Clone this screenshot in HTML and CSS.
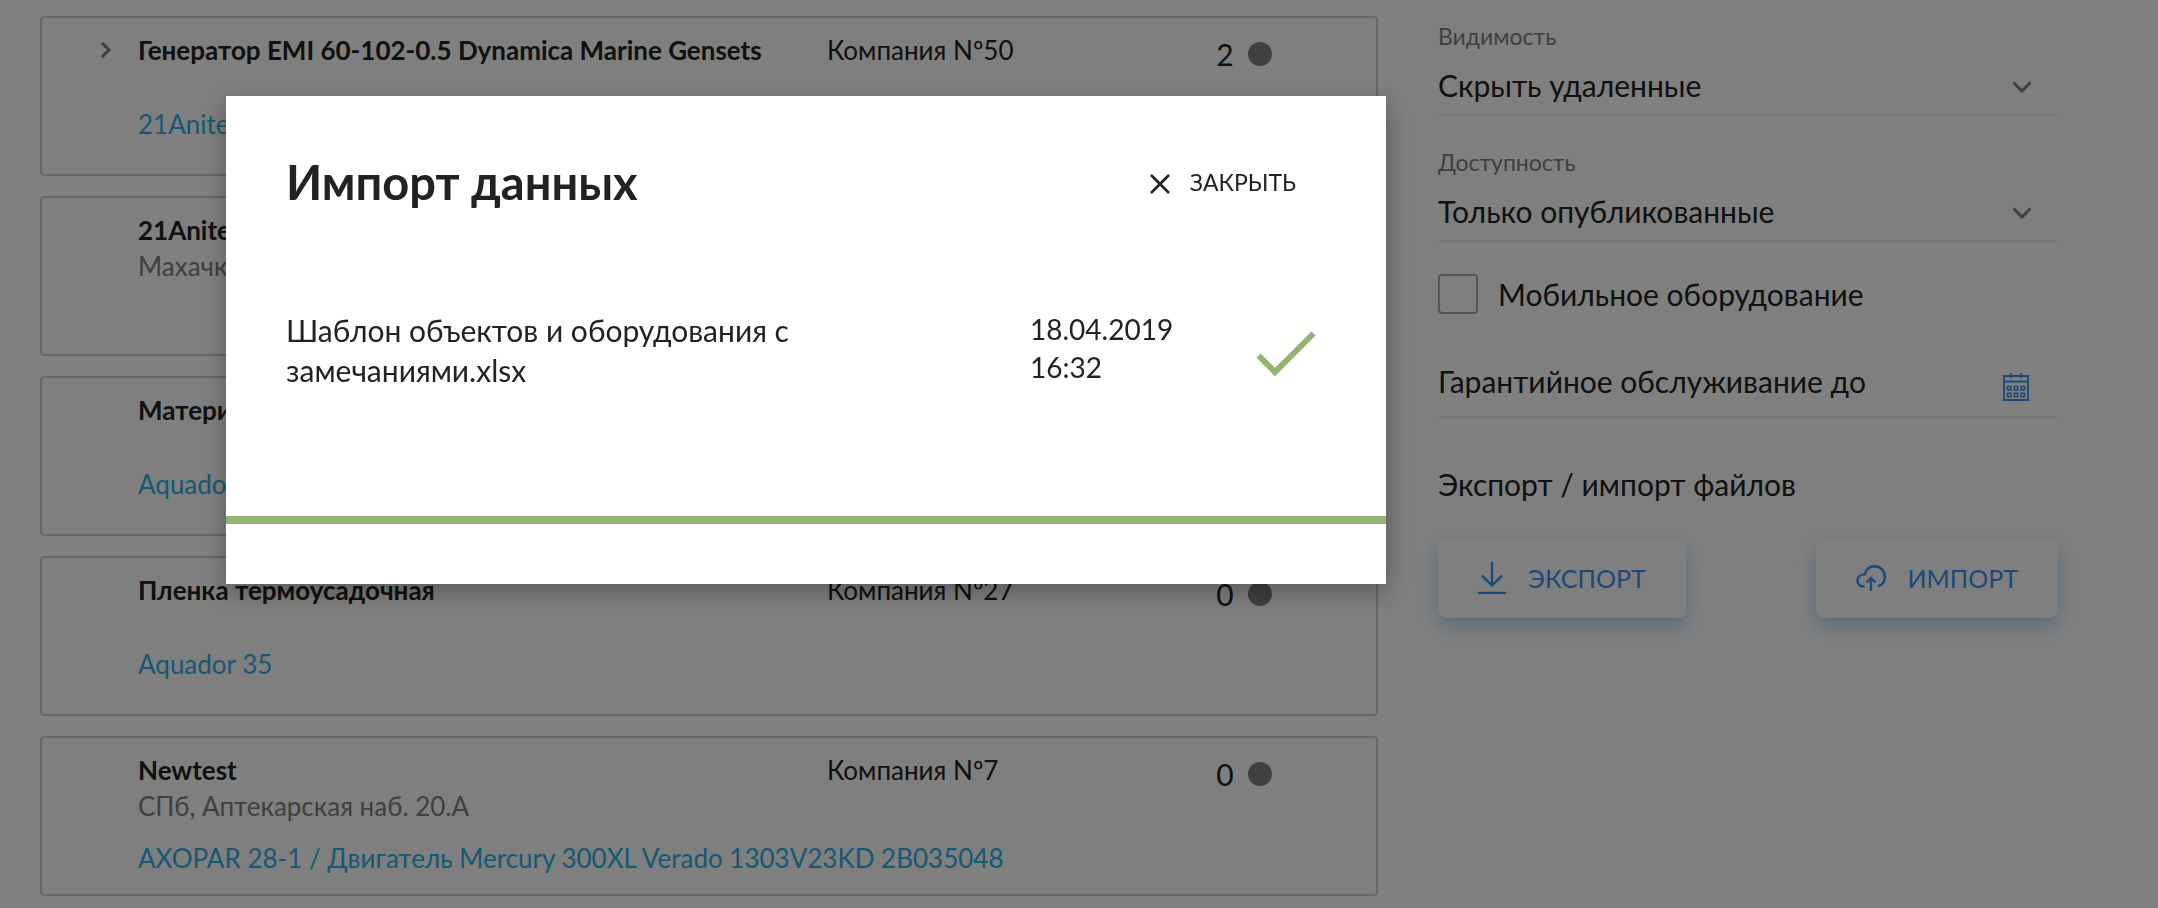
FILE: index.html
```html
<!DOCTYPE html>
<html lang="ru">
<head>
<meta charset="utf-8">
<meta name="viewport" content="width=device-width, initial-scale=1">
<title>Импорт данных</title>
<link rel="stylesheet" href="styles.css">
</head>
<body>
<div class="page">
  <main class="list">
    <article class="card">
      <button class="card-toggle" type="button" aria-label="Развернуть">
        <svg class="icon-toggle" viewBox="0 0 12 18"><path d="M2 2l7 7-7 7"/></svg>
      </button>
      <div class="card-info">
        <h2 class="card-title">Генератор EMI 60-102-0.5 Dynamica Marine Gensets</h2>
        <a class="card-link" href="#">21Anitek</a>
      </div>
      <p class="card-company">Компания Nº50</p>
      <p class="card-count">2<span class="dot"></span></p>
    </article>
    <article class="card">
      <div class="card-info">
        <h2 class="card-title">21Anitek</h2>
        <p class="card-address">Махачкала</p>
      </div>
    </article>
    <article class="card">
      <div class="card-info">
        <h2 class="card-title">Материал</h2>
        <a class="card-link" href="#">Aquador 35</a>
      </div>
    </article>
    <article class="card">
      <div class="card-info">
        <h2 class="card-title">Пленка термоусадочная</h2>
        <a class="card-link" href="#">Aquador 35</a>
      </div>
      <p class="card-company">Компания Nº27</p>
      <p class="card-count">0<span class="dot"></span></p>
    </article>
    <article class="card">
      <div class="card-info card-info-wide">
        <h2 class="card-title">Newtest</h2>
        <p class="card-address">СПб, Аптекарская наб. 20.А</p>
        <a class="card-link" href="#">AXOPAR 28-1 / Двигатель Mercury 300XL Verado 1303V23KD 2B035048</a>
      </div>
      <p class="card-company">Компания Nº7</p>
      <p class="card-count">0<span class="dot"></span></p>
    </article>
  </main>

  <aside class="filters">
    <div class="field">
      <label class="field-label" for="visibility">Видимость</label>
      <div class="control control-select">
        <select class="field-input" id="visibility"><option>Скрыть удаленные</option></select>
        <svg class="icon-chevron" viewBox="0 0 20 12"><path d="M1.500 1.500L10 10l8.500-8.500"/></svg>
      </div>
    </div>
    <div class="field">
      <label class="field-label" for="access">Доступность</label>
      <div class="control control-select">
        <select class="field-input" id="access"><option>Только опубликованные</option></select>
        <svg class="icon-chevron" viewBox="0 0 20 12"><path d="M1.500 1.500L10 10l8.500-8.500"/></svg>
      </div>
    </div>
    <label class="check"><input class="check-box" type="checkbox">Мобильное оборудование</label>
    <div class="control control-date">
      <input class="field-input" type="text" placeholder="Гарантийное обслуживание до" aria-label="Гарантийное обслуживание до">
      <svg class="icon-calendar" viewBox="0 0 26 28">
        <path stroke-width="1.800" d="M1 3h24v24H1zM1 8.500h24M8 0v5.500M18 0v5.500"/>
        <path stroke-width="1.500" d="M4.500 13.500h3.400v3.400H4.500zM11.300 13.500h3.400v3.400h-3.400zM18.100 13.500h3.400v3.400h-3.400zM4.500 20.300h3.400v3.400H4.500zM11.300 20.300h3.400v3.400h-3.400zM18.100 20.300h3.400v3.400h-3.400z"/>
      </svg>
    </div>
    <h2 class="files-title">Экспорт / импорт файлов</h2>
    <div class="files-actions">
      <button class="action" type="button">
        <svg class="icon-export" viewBox="0 0 28 32"><path d="M14 0v23M4 13.500L14 23.500l10-10M0 31h28"/></svg>
        ЭКСПОРТ
      </button>
      <button class="action" type="button">
        <svg class="icon-import" viewBox="0 0 30 26"><path d="M8.500 21.500C-.8 22-1.200 9.500 9 9.300C9.500 4.500 13.500 1.300 18.500 1.300C24.500 1.300 28.800 6 28.800 12C28.800 16.500 26.500 20 22 21.200M15 26V13.500M10.500 17.500l4.500-4.500 4.500 4.500"/></svg>
        ИМПОРТ
      </button>
    </div>
  </aside>
</div>

<div class="overlay">
  <section class="modal" role="dialog" aria-modal="true" aria-labelledby="modal-title">
    <header class="modal-head">
      <h1 class="modal-title" id="modal-title">Импорт данных</h1>
      <button class="close" type="button">
        <svg class="icon-close" viewBox="0 0 20 20"><path d="M1 1l18 18M19 1L1 19"/></svg>
        ЗАКРЫТЬ
      </button>
    </header>
    <div class="import-row">
      <p class="import-name">Шаблон объектов и оборудования с замечаниями.xlsx</p>
      <time class="import-date" datetime="2019-04-18T16:32">18.04.2019 16:32</time>
      <svg class="icon-done" viewBox="0 0 60 46"><path d="M2.500 24.500L19 41 57.500 2.500"/></svg>
    </div>
    <div class="import-progress"></div>
  </section>
</div>
</body>
</html>
```

FILE: styles.css
```css
* {
  box-sizing: border-box;
}

body {
  margin: 0;
  height: 100vh;
  overflow: hidden;
  background: #fff;
  color: #222;
  font-family: Lato, "Open Sans", sans-serif;
  font-size: 26px;
}

h1,
h2,
p {
  margin: 0;
}

button,
input,
select {
  font: inherit;
  color: inherit;
}

svg {
  display: block;
  flex: none;
  fill: none;
  stroke: currentColor;
}

.page {
  display: grid;
  grid-template-columns: 1338fr 620fr;
  gap: 60px;
  padding: 16px 100px 0 40px;
}

/* Equipment list */

.list {
  display: flex;
  flex-direction: column;
  gap: 20px;
}

.card {
  display: grid;
  grid-template-columns: 96px 690fr 390fr 160fr;
  min-height: 160px;
  padding: 14px 0 0;
  border: 2px solid #d0d0d0;
  border-radius: 4px;
  line-height: 36px;
}

.card-toggle {
  grid-area: 1 / 1;
  align-self: start;
  padding: 9px 0 9px 58px;
  border: 0;
  background: none;
  color: #808080;
}

.icon-toggle {
  width: 12px;
  height: 18px;
  stroke-width: 3;
}

.card-info {
  grid-area: 1 / 2;
  display: flex;
  flex-direction: column;
  align-items: flex-start;
}

.card-info-wide {
  grid-column-end: 5;
}

.card-title {
  font-size: 26px;
  font-weight: 700;
}

.card-address {
  color: #808080;
}

.card-link {
  margin-top: 38px;
  color: #2eb0e8;
  text-decoration: none;
}

.card-address + .card-link {
  margin-top: 16px;
}

.card-company {
  grid-area: 1 / 3;
}

.card-count {
  grid-area: 1 / 4;
  display: flex;
  align-items: center;
  align-self: start;
  gap: 14px;
  height: 44px;
  font-size: 30px;
}

.dot {
  width: 24px;
  height: 24px;
  border-radius: 50%;
  background: #808080;
}

/* Filters */

.filters {
  display: flex;
  flex-direction: column;
}

.field {
  height: 126px;
}

.field-label {
  display: block;
  padding-top: 6px;
  color: #808080;
  font-size: 23px;
  line-height: 28px;
}

.control {
  display: flex;
  align-items: center;
  height: 66px;
  padding-right: 26px;
  border-bottom: 2px solid #ececec;
}

.control-select {
  padding-top: 6px;
}

.field-input {
  flex: 1;
  min-width: 0;
  padding: 0;
  border: 0;
  background: none;
  appearance: none;
  font-size: 30px;
  line-height: 40px;
}

.field-input::placeholder {
  color: #222;
  opacity: 1;
}

.icon-chevron {
  width: 20px;
  height: 12px;
  margin-top: 4px;
  color: #808080;
  stroke-width: 3;
}

.check {
  display: flex;
  align-items: center;
  gap: 20px;
  height: 52px;
  font-size: 30px;
}

.check-box {
  width: 40px;
  height: 40px;
  margin: 0;
  border: 2px solid #aaa;
  border-radius: 4px;
  appearance: none;
}

.control-date {
  height: 70px;
  margin-top: 28px;
  padding: 0 29px 2px 0;
}

.icon-calendar {
  width: 26px;
  height: 28px;
  margin-top: 12px;
  color: #3a92f4;
}

.files-title {
  margin-top: 46px;
  font-size: 30px;
  font-weight: 400;
  line-height: 40px;
}

.files-actions {
  display: flex;
  justify-content: space-between;
  margin-top: 34px;
}

.action {
  display: flex;
  align-items: center;
  gap: 22px;
  height: 80px;
  padding: 0 40px;
  border: 0;
  border-radius: 8px;
  background: #fff;
  box-shadow: 0 8px 20px rgba(58, 150, 230, 0.4);
  color: #3a92f4;
  font-size: 25px;
}

.icon-export {
  width: 28px;
  height: 32px;
  stroke-width: 2.4;
}

.icon-import {
  width: 30px;
  height: 26px;
  stroke-width: 2.4;
}

/* Import dialog */

.overlay {
  position: fixed;
  inset: 0;
  display: grid;
  grid-template-columns: 226fr 1160fr 772fr;
  align-items: start;
  padding-top: 96px;
  background: rgba(0, 0, 0, 0.5);
}

.modal {
  grid-column: 2;
  padding: 54px 0 60px;
  background: #fff;
  box-shadow: 0 8px 24px rgba(0, 0, 0, 0.3);
}

.modal-head {
  display: flex;
  align-items: center;
  justify-content: space-between;
  padding: 0 90px 0 60px;
}

.modal-title {
  font-size: 47px;
  font-weight: 700;
  line-height: 64px;
}

.close {
  display: flex;
  align-items: center;
  gap: 20px;
  padding: 0;
  border: 0;
  background: none;
  font-size: 23px;
}

.icon-close {
  width: 20px;
  height: 20px;
  margin-top: 4px;
  stroke-width: 2.6;
}

.import-row {
  display: grid;
  grid-template-columns: 1fr 140px 60px;
  column-gap: 86px;
  align-items: center;
  min-height: 80px;
  margin: 96px 0 126px;
  padding: 0 70px 0 60px;
  font-size: 30px;
  line-height: 40px;
}

.import-date {
  padding-bottom: 4px;
  font-size: 28px;
  line-height: 38px;
}

.icon-done {
  width: 60px;
  height: 46px;
  margin-top: 8px;
  color: #93b572;
  stroke-width: 6;
}

.import-progress {
  height: 8px;
  background: #93b572;
}
```
